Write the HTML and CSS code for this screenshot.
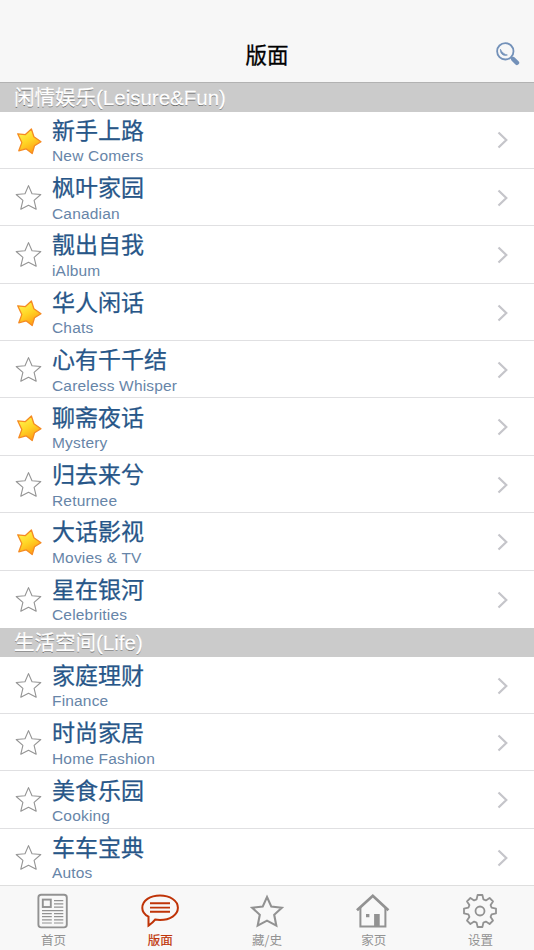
FILE: index.html
```html
<!DOCTYPE html>
<html lang="zh-CN">
<head>
<meta charset="utf-8">
<title>版面</title>
<link rel="stylesheet" href="styles.css">
</head>
<body>
<svg class="defs" width="0" height="0" aria-hidden="true">
  <defs>
    <linearGradient id="gold" x1="0.2" y1="0" x2="0.7" y2="1">
      <stop offset="0.1" stop-color="#fff04a"/>
      <stop offset="0.5" stop-color="#ffd424"/>
      <stop offset="1" stop-color="#ff9612"/>
    </linearGradient>
    <symbol id="star-on" viewBox="0 0 28 28">
      <path d="M17.4 2 L19.9 9.8 L27 14.7 L20.5 18.7 L18.2 26.6 L12 21.8 L4.8 23.8 L7.8 15.6 L3.7 6.8 L11.4 7.6 Z" fill="url(#gold)" stroke="#f58a22" stroke-width="1.3" stroke-linejoin="round"/>
    </symbol>
    <symbol id="star-off" viewBox="0 0 28 28">
      <path d="M14.5 1.6 L18 9.7 L26.8 10.5 L20.1 16.4 L22.2 25.2 L14.5 21.2 L6.8 25.2 L8.9 16.4 L2.2 10.5 L11 9.7 Z" fill="none" stroke="#949494" stroke-width="1.1" stroke-linejoin="round"/>
    </symbol>
    <symbol id="chevron" viewBox="0 0 12 18">
      <path d="M1.5 1.5 L9.3 9 L1.5 16.5" fill="none" stroke="#c5c5ca" stroke-width="2.2"/>
    </symbol>
  </defs>
</svg>
<div class="app">
  <header class="navbar">
    <h1>版面</h1>
    <svg class="search" viewBox="0 0 24 24">
      <circle cx="9.3" cy="9.3" r="8.2" fill="none" stroke="#7391b9" stroke-width="1.8"/>
      <path d="M4.4 7.2 C4.1 11.9 7.3 14.4 11.4 13 C8.4 12.5 6 10.6 4.4 7.2 Z" fill="#7391b9" stroke="#7391b9" stroke-width=".7"/>
      <path d="M14.8 14.8 L17 17" stroke="#7391b9" stroke-width="2"/>
      <path d="M17.2 17.1 L21 20.8" stroke="#7391b9" stroke-width="4.4" stroke-linecap="round"/>
    </svg>
  </header>
  <main>
    <h2>闲情娱乐(Leisure&amp;Fun)</h2>
    <ul>
      <li><svg class="star"><use href="#star-on"/></svg><div class="name"><b>新手上路</b><span>New Comers</span></div><svg class="chev"><use href="#chevron"/></svg></li>
      <li><svg class="star"><use href="#star-off"/></svg><div class="name"><b>枫叶家园</b><span>Canadian</span></div><svg class="chev"><use href="#chevron"/></svg></li>
      <li><svg class="star"><use href="#star-off"/></svg><div class="name"><b>靓出自我</b><span>iAlbum</span></div><svg class="chev"><use href="#chevron"/></svg></li>
      <li><svg class="star"><use href="#star-on"/></svg><div class="name"><b>华人闲话</b><span>Chats</span></div><svg class="chev"><use href="#chevron"/></svg></li>
      <li><svg class="star"><use href="#star-off"/></svg><div class="name"><b>心有千千结</b><span>Careless Whisper</span></div><svg class="chev"><use href="#chevron"/></svg></li>
      <li><svg class="star"><use href="#star-on"/></svg><div class="name"><b>聊斋夜话</b><span>Mystery</span></div><svg class="chev"><use href="#chevron"/></svg></li>
      <li><svg class="star"><use href="#star-off"/></svg><div class="name"><b>归去来兮</b><span>Returnee</span></div><svg class="chev"><use href="#chevron"/></svg></li>
      <li><svg class="star"><use href="#star-on"/></svg><div class="name"><b>大话影视</b><span>Movies &amp; TV</span></div><svg class="chev"><use href="#chevron"/></svg></li>
      <li><svg class="star"><use href="#star-off"/></svg><div class="name"><b>星在银河</b><span>Celebrities</span></div><svg class="chev"><use href="#chevron"/></svg></li>
    </ul>
    <h2>生活空间(Life)</h2>
    <ul>
      <li><svg class="star"><use href="#star-off"/></svg><div class="name"><b>家庭理财</b><span>Finance</span></div><svg class="chev"><use href="#chevron"/></svg></li>
      <li><svg class="star"><use href="#star-off"/></svg><div class="name"><b>时尚家居</b><span>Home Fashion</span></div><svg class="chev"><use href="#chevron"/></svg></li>
      <li><svg class="star"><use href="#star-off"/></svg><div class="name"><b>美食乐园</b><span>Cooking</span></div><svg class="chev"><use href="#chevron"/></svg></li>
      <li><svg class="star"><use href="#star-off"/></svg><div class="name"><b>车车宝典</b><span>Autos</span></div><svg class="chev"><use href="#chevron"/></svg></li>
    </ul>
  </main>
  <nav class="tabs">
    <a>
      <svg viewBox="-20 -18 40 36" fill="none" stroke="currentColor">
        <rect x="-14.6" y="-16.2" width="28.4" height="32.6" rx="2.8" stroke-width="1.9"/>
        <rect x="-10.2" y="-11.4" width="8" height="7.4" stroke-width="1.9"/>
        <path d="M1 -10.3H10.3M1 -7.1H10.3M1 -3.9H10.3M-11 -.3H10.3M-11 2.6H-1.2M1 2.6H10.3M-11 5.6H-1.2M1 5.6H10.3M-11 8.8H-1.2M1 8.8H10.3M-11 12H-1.2M1 12H10.3" stroke-width="1.2"/>
      </svg>
      <span>首页</span>
    </a>
    <a class="active">
      <svg viewBox="-20 -18 40 36" fill="none" stroke="currentColor">
        <path d="M-11.5 14.6 V5.7 C-15.6 3.6 -17.7 .5 -17.7 -3 C-17.7 -10.6 -9.8 -15.4 0 -15.4 C10 -15.4 17.9 -10.4 17.9 -3.2 C17.9 4 10 9 0 9 C-1.9 9 -3.4 8.9 -4.9 8.6 C-6.5 10.8 -8.8 12.7 -11.5 14.6 Z" stroke-width="2"/>
        <path d="M-10 -7.7H10M-10 -3.4H10M-10 .8H10" stroke-width="1.9"/>
      </svg>
      <span>版面</span>
    </a>
    <a>
      <svg viewBox="-20 -18 40 36" fill="none" stroke="currentColor">
        <path d="M0 -14 L4.3 -4.4 L14.8 -3.3 L7.2 3.8 L9.3 14.6 L0 9.6 L-9.3 14.6 L-7.2 3.8 L-14.8 -3.3 L-4.3 -4.4 Z" stroke-width="2.1"/>
      </svg>
      <span>藏/史</span>
    </a>
    <a>
      <svg viewBox="-20 -18 40 36" fill="none" stroke="currentColor">
        <path d="M-17 -.8 L-1.2 -15.2 L14.4 -.8" stroke-width="2.8"/>
        <path d="M-13.6 -3.5V15.4H11.4V-3.5" stroke-width="2"/>
        <path d="M-8 3h3.4v3.2h-3.4zM.1 3h5.6v12.4H.1z" fill="currentColor" stroke="none"/>
      </svg>
      <span>家页</span>
    </a>
    <a>
      <svg viewBox="-19 -18 40 36" fill="none" stroke="currentColor" stroke-linejoin="round">
        <path d="M-3.4 -11.6 L-2.4 -16 H2.4 L3.4 -11.6 L5.9 -10.6 L9.6 -13 L13 -9.6 L10.6 -5.9 L11.6 -3.4 L16 -2.4 V2.4 L11.6 3.4 L10.6 5.9 L13 9.6 L9.6 13 L5.9 10.6 L3.4 11.6 L2.4 16 H-2.4 L-3.4 11.6 L-5.9 10.6 L-9.6 13 L-13 9.6 L-10.6 5.9 L-11.6 3.4 L-16 2.4 V-2.4 L-11.6 -3.4 L-10.6 -5.9 L-13 -9.6 L-9.6 -13 L-5.9 -10.6 Z" stroke-width="1.8"/>
        <circle r="4.5" stroke-width="1.8"/>
      </svg>
      <span>设置</span>
    </a>
  </nav>
</div>
</body>
</html>
```
FILE: styles.css
```css
* { box-sizing: border-box; }

body {
  margin: 0;
  background: #fff;
  font-family: "Liberation Sans", "Noto Sans CJK SC", sans-serif;
}

.defs { display: block; height: 0; }

.app {
  display: flex;
  flex-direction: column;
  height: 950px;
  overflow: hidden;
}

.navbar {
  flex: none;
  display: grid;
  grid-template-columns: 40px 1fr 40px;
  align-items: center;
  height: 83px;
  padding-top: 26px;
  background: #f7f7f7;
  border-bottom: 1px solid #b2b2b2;
}

.navbar h1 {
  grid-column: 2;
  margin: 0;
  text-align: center;
  font: 400 21.5px/30px "Noto Sans CJK SC", sans-serif;
  color: #000;
  -webkit-text-stroke: 0.3px #000;
}

.search { width: 24px; height: 24px; margin-left: 2px; }

main { flex: 1; min-height: 0; overflow: hidden; }

h2 {
  margin: 0;
  height: 28.5px;
  padding: 1px 0 0 14px;
  background: #cbcbcb;
  color: #fff;
  font-size: 20.5px;
  font-weight: 400;
  line-height: 28px;
  -webkit-text-stroke: 0.3px #fff;
  text-shadow: 0 1.3px 0.6px #666;
}

ul { margin: 0; padding: 0; list-style: none; }

li {
  display: flex;
  align-items: center;
  height: 57.4px;
  padding: 0 25px 0 14px;
  border-bottom: 1px solid #e0e0e2;
}

li:last-child { border-bottom-color: transparent; }

.star { flex: none; width: 28px; height: 28px; margin: 2px 10px 0 0; }

.name { flex: 1; display: flex; flex-direction: column; }

.name b {
  font: 400 23px/30px "Noto Sans CJK SC", sans-serif;
  color: #275688;
  -webkit-text-stroke: 0.25px #275688;
}

.name span {
  margin-top: 3.6px;
  padding-bottom: 0.4px;
  font-size: 15.5px;
  line-height: 18px;
  letter-spacing: 0.18px;
  color: #6785a8;
}

.chev { flex: none; width: 12px; height: 18px; margin-top: 1.6px; }

.tabs {
  flex: none;
  display: grid;
  grid-template-columns: repeat(5, 1fr);
  height: 65px;
  background: #f8f8f8;
  border-top: 1px solid #dedede;
}

.tabs a {
  display: flex;
  flex-direction: column;
  align-items: center;
  padding-top: 7px;
  color: #929292;
}

.tabs svg { width: 40px; height: 36px; }

.tabs span {
  margin-top: 2px;
  font: 400 12.5px/18px "Noto Sans CJK SC", sans-serif;
}

.tabs .active { color: #bf3408; }
.tabs .active span { -webkit-text-stroke: 0.2px #bf3408; }
```
